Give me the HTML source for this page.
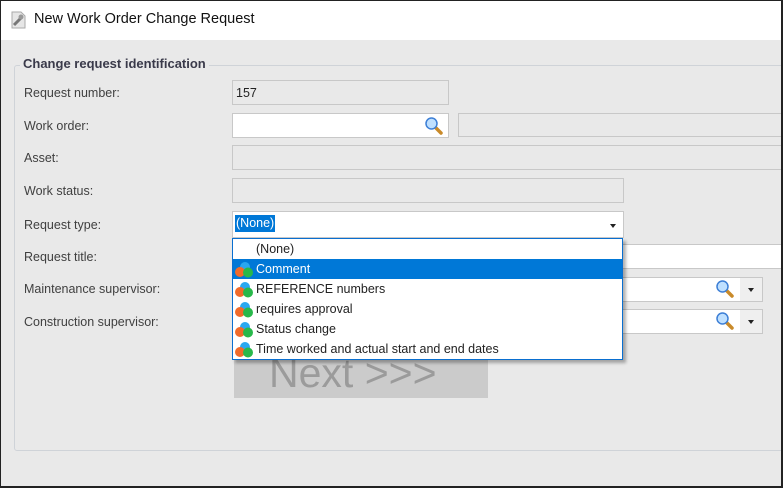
<!DOCTYPE html>
<html><head><style>
*{box-sizing:border-box;margin:0;padding:0}
body{width:783px;height:488px;overflow:hidden;background:#e9e9e9;font-family:"Liberation Sans",Tahoma,sans-serif;font-size:12.5px;color:#3c3c3c;position:relative}
.win{position:absolute;left:0;top:0;width:783px;height:488px;border:1px solid #222;border-right:2px solid #222;border-bottom:2px solid #222}
.title{position:absolute;left:0;top:0;width:781px;height:40px;background:#fff}
.title span{position:absolute;left:34px;top:11px;font-size:14.5px;color:#111}
.abs{position:absolute}
.grp{position:absolute;left:14px;top:65px;width:780px;height:386px;border:1px solid #cfd3d8;border-radius:3px}
.gt{position:absolute;left:20px;top:56px;background:#e9e9e9;padding:0 3px;font-weight:bold;font-size:13px;color:#3a3a4a}
.lbl{position:absolute;left:24px;color:#404040}
.box{position:absolute;border:1px solid #c8c8c8;background:#e9e9e9;height:25px}
.w{background:#fff}
.dd{position:absolute;left:232px;top:238px;width:391px;height:122px;background:#fff;border:1px solid #0a6fd0;box-shadow:3px 3px 3px rgba(0,0,0,.3)}
.it{height:20px;line-height:20px;padding-left:23px;position:relative;color:#222}
.it.sel{background:#0078d7;color:#fff}
.ic{position:absolute;left:1px;top:2px;width:20px;height:17px}
.arrow{position:absolute;width:0;height:0;border-left:3.5px solid transparent;border-right:3.5px solid transparent;border-top:4px solid #222}
</style></head><body>
<div class="title">
<svg class="abs" style="left:10px;top:11px" width="17" height="18" viewBox="0 0 17 18"><path d="M2 1h9l4 4v12H2z" fill="#e6e6e6" stroke="#aaa"/><path d="M4 14l7-7" stroke="#777" stroke-width="3"/><circle cx="11" cy="6" r="2.5" fill="#999"/></svg>
<span>New Work Order Change Request</span></div>
<div class="grp"></div>
<div class="gt">Change request identification</div>

<div class="lbl" style="top:86px">Request number:</div>
<div class="box" style="left:232px;top:80px;width:217px;height:25px;padding:5px 3px;color:#222">157</div>

<div class="lbl" style="top:119px">Work order:</div>
<div class="box w" style="left:232px;top:113px;width:217px"></div>
<svg class="abs" style="left:424px;top:116px" width="20" height="20" viewBox="0 0 20 20"><path d="M10 10l7 7" stroke="#c98a2a" stroke-width="3.5" stroke-linecap="round"/><circle cx="7.5" cy="7.5" r="5.5" fill="#bfe0ff" stroke="#3d7fd6" stroke-width="1.5"/></svg>
<div class="box" style="left:458px;top:113px;width:330px;height:24px"></div>

<div class="lbl" style="top:151px">Asset:</div>
<div class="box" style="left:232px;top:145px;width:560px"></div>

<div class="lbl" style="top:184px">Work status:</div>
<div class="box" style="left:232px;top:178px;width:392px"></div>

<div class="lbl" style="top:218px">Request type:</div>
<div class="box w" style="left:232px;top:211px;width:392px;height:27px"></div>
<div class="abs" style="left:235px;top:215px;background:#0078d7;color:#fff;padding:1px 1px;height:17px;line-height:15px">(None)</div>
<div class="arrow" style="left:610px;top:224px"></div>

<div class="lbl" style="top:250px">Request title:</div>
<div class="box w" style="left:232px;top:244px;width:560px"></div>

<div class="lbl" style="top:282px">Maintenance supervisor:</div>
<div class="box w" style="left:232px;top:277px;width:531px"></div>
<div class="abs" style="left:740px;top:278px;width:22px;height:23px;background:#efefef"></div>
<div class="arrow" style="left:748px;top:288px"></div>
<svg class="abs" style="left:715px;top:279px" width="20" height="20" viewBox="0 0 20 20"><path d="M10 10l7 7" stroke="#c98a2a" stroke-width="3.5" stroke-linecap="round"/><circle cx="7.5" cy="7.5" r="5.5" fill="#bfe0ff" stroke="#3d7fd6" stroke-width="1.5"/></svg>

<div class="lbl" style="top:315px">Construction supervisor:</div>
<div class="box w" style="left:232px;top:309px;width:531px"></div>
<div class="abs" style="left:740px;top:310px;width:22px;height:23px;background:#efefef"></div>
<div class="arrow" style="left:748px;top:320px"></div>
<svg class="abs" style="left:715px;top:311px" width="20" height="20" viewBox="0 0 20 20"><path d="M10 10l7 7" stroke="#c98a2a" stroke-width="3.5" stroke-linecap="round"/><circle cx="7.5" cy="7.5" r="5.5" fill="#bfe0ff" stroke="#3d7fd6" stroke-width="1.5"/></svg>

<div class="abs" style="left:234px;top:346px;width:254px;height:52px;background:#cbcbcb;color:#9b9b9b;font-size:41px;line-height:54px;padding-left:35px;white-space:nowrap;overflow:hidden">Next &gt;&gt;&gt;</div>

<div class="dd">
<div class="it">(None)</div>
<div class="it sel"><svg class="ic" viewBox="0 0 20 17"><circle cx="11" cy="6" r="5" fill="#2aa7f0"/><circle cx="6" cy="11" r="5" fill="#f06a2a"/><circle cx="14" cy="11.5" r="5" fill="#28b84a"/></svg>Comment</div>
<div class="it"><svg class="ic" viewBox="0 0 20 17"><circle cx="11" cy="6" r="5" fill="#2aa7f0"/><circle cx="6" cy="11" r="5" fill="#f06a2a"/><circle cx="14" cy="11.5" r="5" fill="#28b84a"/></svg>REFERENCE numbers</div>
<div class="it"><svg class="ic" viewBox="0 0 20 17"><circle cx="11" cy="6" r="5" fill="#2aa7f0"/><circle cx="6" cy="11" r="5" fill="#f06a2a"/><circle cx="14" cy="11.5" r="5" fill="#28b84a"/></svg>requires approval</div>
<div class="it"><svg class="ic" viewBox="0 0 20 17"><circle cx="11" cy="6" r="5" fill="#2aa7f0"/><circle cx="6" cy="11" r="5" fill="#f06a2a"/><circle cx="14" cy="11.5" r="5" fill="#28b84a"/></svg>Status change</div>
<div class="it"><svg class="ic" viewBox="0 0 20 17"><circle cx="11" cy="6" r="5" fill="#2aa7f0"/><circle cx="6" cy="11" r="5" fill="#f06a2a"/><circle cx="14" cy="11.5" r="5" fill="#28b84a"/></svg>Time worked and actual start and end dates</div>
</div>
<div class="win"></div>
</body></html>
